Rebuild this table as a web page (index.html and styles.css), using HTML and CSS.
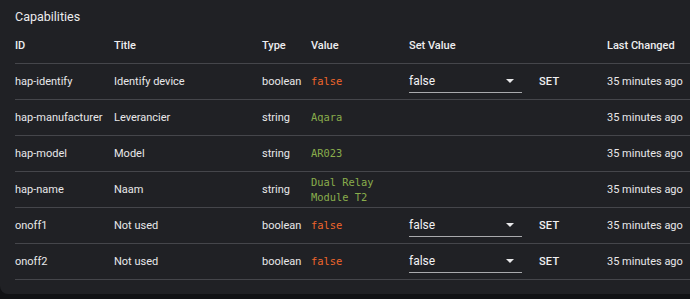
FILE: index.html
```html
<!DOCTYPE html>
<html>
<head>
<meta charset="utf-8">
<link rel="stylesheet" href="styles.css">
</head>
<body>
<div class="card">
  <div class="card-title">Capabilities</div>
  <table class="caps">
    <colgroup>
      <col class="c-id"><col class="c-title"><col class="c-type"><col class="c-value"><col class="c-set"><col class="c-btn"><col class="c-changed">
    </colgroup>
    <thead>
      <tr><th>ID</th><th>Title</th><th>Type</th><th>Value</th><th>Set Value</th><th></th><th>Last Changed</th></tr>
    </thead>
    <tbody>
      <tr>
        <td>hap-identify</td><td>Identify device</td><td>boolean</td><td><span class="val bool">false</span></td>
        <td><div class="select"><span>false</span><span class="arrow"></span></div></td><td><span class="setbtn">SET</span></td>
        <td>35 minutes ago</td>
      </tr>
      <tr>
        <td>hap-manufacturer</td><td>Leverancier</td><td>string</td><td><span class="val str">Aqara</span></td>
        <td></td><td></td><td>35 minutes ago</td>
      </tr>
      <tr>
        <td>hap-model</td><td>Model</td><td>string</td><td><span class="val str">AR023</span></td>
        <td></td><td></td><td>35 minutes ago</td>
      </tr>
      <tr>
        <td>hap-name</td><td>Naam</td><td>string</td><td><span class="val str">Dual Relay Module T2</span></td>
        <td></td><td></td><td>35 minutes ago</td>
      </tr>
      <tr>
        <td>onoff1</td><td>Not used</td><td>boolean</td><td><span class="val bool">false</span></td>
        <td><div class="select"><span>false</span><span class="arrow"></span></div></td><td><span class="setbtn">SET</span></td>
        <td>35 minutes ago</td>
      </tr>
      <tr>
        <td>onoff2</td><td>Not used</td><td>boolean</td><td><span class="val bool">false</span></td>
        <td><div class="select"><span>false</span><span class="arrow"></span></div></td><td><span class="setbtn">SET</span></td>
        <td>35 minutes ago</td>
      </tr>
    </tbody>
  </table>
</div>
</body>
</html>
```
FILE: styles.css
```css
html, body {
  margin: 0;
  padding: 0;
  background: #111215;
  overflow: hidden;
  height: 299px;
}
body {
  font-family: Roboto, "Liberation Sans", sans-serif;
  color: #e8e8ea;
}
.card {
  width: 715px;
  background: #202125;
  border-radius: 0 0 8px 8px;
  padding: 8px 15px 14px 15px;
  box-sizing: border-box;
}
.card-title {
  font-size: 12.5px;
  line-height: 18px;
  height: 20px;
  color: #ececee;
}
.caps {
  width: 100%;
  border-collapse: collapse;
  table-layout: fixed;
  font-size: 11px;
}
.c-id { width: 99px; }
.c-title { width: 148px; }
.c-type { width: 49px; }
.c-value { width: 98px; }
.c-set { width: 130px; }
.c-btn { width: 68px; }
.caps th {
  text-align: left;
  font-weight: 500;
  height: 35px;
  padding: 0;
  color: #eeeef0;
  border-bottom: 1px solid #45464b;
  vertical-align: middle;
}
.caps td {
  height: 35px;
  padding: 0;
  border-bottom: 1px solid #45464b;
  vertical-align: middle;
  white-space: nowrap;
}
.caps td:nth-child(4) { white-space: normal; padding-right: 14px; }
.val {
  font-family: "DejaVu Sans Mono", "Liberation Mono", monospace;
  font-size: 10.4px;
  line-height: 15px;
  display: block;
}
.val.bool { color: #ef662c; }
.val.str { color: #89ad4c; }
.select {
  width: 113px;
  height: 22px;
  box-sizing: border-box;
  border-bottom: 1px solid #a9aaad;
  display: flex;
  align-items: center;
  justify-content: space-between;
  font-size: 12px;
  color: #f2f2f4;
  padding-bottom: 1px;
}
.arrow {
  width: 0;
  height: 0;
  border-left: 4px solid transparent;
  border-right: 4px solid transparent;
  border-top: 4px solid #e8e8ea;
  margin-right: 8px;
}
.setbtn {
  font-weight: 500;
  font-size: 11px;
  letter-spacing: 0.2px;
  color: #f0f0f2;
}
```
